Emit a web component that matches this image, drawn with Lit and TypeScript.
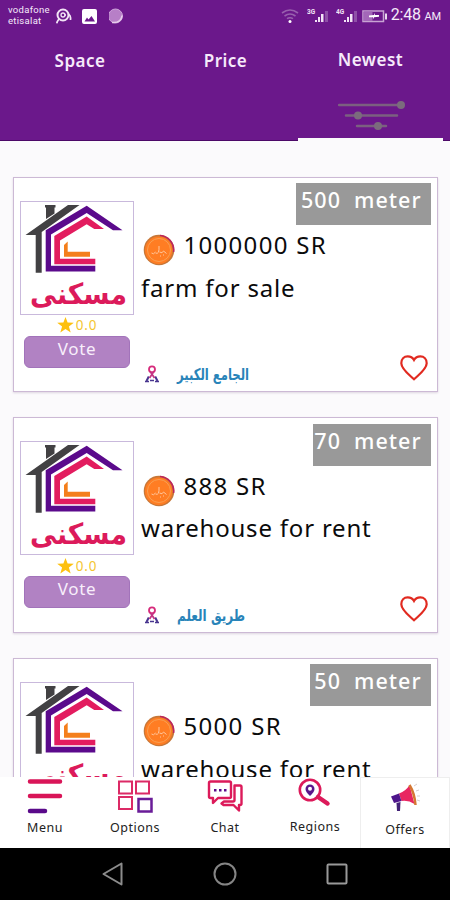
import { LitElement, html, css, svg } from "lit";
import { customElement, property } from "lit/decorators.js";

interface Listing {
  area: string;
  areaWidth: number;
  price: string;
  title: string;
  place: string;
  placeWidth: number;
}

const listings: Listing[] = [
  { area: "500", areaWidth: 135, price: "1000000 SR", title: "farm for sale", place: "الجامع الكبير", placeWidth: 72 },
  { area: "70", areaWidth: 118, price: "888 SR", title: "warehouse for rent", place: "طريق العلم", placeWidth: 68 },
  { area: "50", areaWidth: 121, price: "5000 SR", title: "warehouse for rent", place: "طريق العلم", placeWidth: 68 },
];

const logo = html`<svg width="112" height="112" viewBox="0 0 112 112">
  <g fill="#424143">
    <path d="M24 3h10.500v2.500h-1v6L25 17V5.500h-1z" />
    <path d="M47 3h11.500L20.700 30v40.700h-6V33H4.500z" />
  </g>
  <path d="M24.700 28.300L65.700 3.700 101.500 28.300H92L65.700 11 30 32.500v31.200h44.300v5.800H24.700z" fill="#5b0a8c" />
  <path d="M33.300 34L65.700 14.500 83 27h-9.700l-7.600-4.700L39 38.500v18.200h35.300v5.600h-41z" fill="#e31c5f" />
  <path d="M43 43l3.700-3.500v10.200H69v5H43z" fill="#f47f1c" />
  <text class="brand" x="9" y="102" textLength="97" lengthAdjust="spacingAndGlyphs">مسكنى</text>
</svg>`;

const star = html`<svg width="17" height="16" viewBox="0 0 17 16"><path fill="#fdc00f" d="M8.500 0l2.100 5.500 6.200.200-4.900 3.700 1.800 6-5.200-3.500-5.200 3.500 1.800-6L.200 5.700l6.200-.200z"/></svg>`;

const coin = html`<svg width="32" height="32" viewBox="0 0 32 32">
  <circle cx="16" cy="16" r="15.300" fill="#c77738" />
  <path d="M17 1.400A14.700 14.700 0 0 1 30.600 18" fill="none" stroke="#bd245e" stroke-width="1.500" />
  <circle cx="15.700" cy="16.200" r="13.700" fill="#ff7d23" />
  <circle cx="16" cy="16" r="11.500" fill="none" stroke="#f8a153" stroke-width="1" />
  <path d="M8.500 19q2 2 4-1m0 1q4 2 3.500-7m.500 6q3 2 4-1l3 2.500M17 22h1M20 21h1" fill="none" stroke="#ffc69c" stroke-width="1" />
</svg>`;

const person = html`<svg width="14" height="18" viewBox="0 0 14 18" fill="none">
  <path d="M3.800 11.500L1.500 16M10.200 11.500l2.300 4.500" stroke="#48358f" stroke-width="2" />
  <path d="M0 16.500h4M10 16.500h4M5 15.500h4" stroke="#48358f" stroke-width="1.500" />
  <circle cx="7" cy="4.300" r="3" stroke="#d62b7b" stroke-width="1.800" />
  <path d="M5.500 7L9.500 13M8.500 7l-4 6" stroke="#c43584" stroke-width="1.800" />
</svg>`;

const heart = html`<svg width="28" height="26" viewBox="0 0 28 26"><path d="M14 24.300C9 19.600 1.300 14 1.300 8.200 1.300 4.200 4 1.400 7.700 1.400c2.500 0 5 1.300 6.300 3.600 1.300-2.300 3.800-3.600 6.300-3.600 3.700 0 6.400 2.800 6.400 6.800C26.700 14 19 19.600 14 24.300z" fill="none" stroke="#e12a20" stroke-width="2.200"/></svg>`;

@customElement("listing-card")
class ListingCard extends LitElement {
  @property({ attribute: false }) item!: Listing;

  static styles = css`
    :host { display: flex; box-sizing: border-box; width: 425px; height: 215.5px; border: 1.3px solid #ccb9d5; background: #fff; box-shadow: 0 1px 2px #ddd5e1; flex: none; padding-left: 6px; }
    .left { width: 114px; padding-top: 23px; display: flex; flex-direction: column; align-items: center; flex: none; }
    .frame { width: 112px; height: 112px; border: 1px solid #c9b9dc; flex: none; }
    .frame svg { display: block; }
    .brand { font: 700 29px "DejaVu Sans", sans-serif; fill: #dc1a5b; direction: ltr; }
    .rating { height: 21px; display: flex; align-items: center; gap: 2px; color: #f4c62f; font-size: 13.500px; letter-spacing: .8px; }
    .vote { width: 106px; height: 32px; box-sizing: border-box; border: 1px solid #a273ba; border-radius: 6px; background: #b182c3; color: #f8eefb; text-align: center; font-size: 17px; line-height: 24px; letter-spacing: .6px; }
    .right { flex: 1; padding: 5.500px 6.500px 0 7px; display: flex; flex-direction: column; min-width: 0; }
    .area { align-self: flex-end; height: 42px; box-sizing: border-box; padding: 0 9px 0 0; text-align: right; background: #999; color: #fff; font-size: 21.500px; font-weight: 500; line-height: 33px; letter-spacing: 1px; white-space: pre; flex: none; }
    .price { display: flex; height: 38px; margin-top: 5px; gap: 8.500px; align-items: center; padding-left: 2px; }
    .price span { margin-top: -8px; }
    .price svg { margin-top: 2px; }
    .price span, .title { font-size: 24px; line-height: 34px; color: #0b0b0b; letter-spacing: 1.300px; white-space: nowrap; }
    .title { margin-top: 2.500px; letter-spacing: .8px; }
    .foot { margin-top: auto; height: 44px; display: flex; align-items: flex-start; padding-left: 4px; }
    .foot .who { margin: 18px 17px 0 0; }
    .place { margin: 17px 0 0 1px; overflow: visible; }
    .place text { font: 700 16px "DejaVu Sans", sans-serif; fill: #2984b9; }
    .heart { margin: 8px 3px 0 auto; }
  `;

  render() {
    const { area, areaWidth, price, title, place, placeWidth } = this.item;
    return html`
      <div class="left">
        <div class="frame">${logo}</div>
        <div class="rating">${star}<span>0.0</span></div>
        <div class="vote">Vote</div>
      </div>
      <div class="right">
        <div class="area" style="width:${areaWidth}px">${area}  meter</div>
        <div class="price">${coin}<span>${price}</span></div>
        <div class="title">${title}</div>
        <div class="foot">
          <div class="who">${person}</div>
          <svg class="place" width=${placeWidth} height="24">
            <text x="0" y="16" textLength=${placeWidth} lengthAdjust="spacingAndGlyphs">${place}</text>
          </svg>
          <div class="heart">${heart}</div>
        </div>
      </div>`;
  }
}

const signal = (label: string) => html`<svg class="signal" width="24" height="18" viewBox="0 0 24 18">
  <text x="0" y="6.500" class="net">${label}</text>
  <path d="M8 15v-2h2v2zM11 15v-5h2v5zM14 15V7h2.500v8z" fill="#f2e4f6" />
  <path d="M18 15V4h3v11z" fill="#8e50a7" />
</svg>`;

const navIcons = {
  menu: svg`<path d="M3 4.500h30M3 19h30" stroke="#d91558" stroke-width="4.500" stroke-linecap="round"/><path d="M3 34h15" stroke="#5a0a8a" stroke-width="4.500" stroke-linecap="round"/>`,
  options: svg`<g fill="none" stroke-width="2"><path stroke="#dc2a66" d="M2 4.500h13v12H2zM19 4.500h13v12H19zM2 20h13v12H2z"/><path stroke="#6a1c98" stroke-width="2.500" d="M21.500 22h13v12.500h-13z"/></g>`,
  chat: svg`<g fill="none" stroke="#dc1a5a" stroke-width="2.400" stroke-linejoin="round"><path d="M3.500 4.500h19q1.500 0 1.500 1.500v13.500q0 1.500-1.500 1.500H11l-5 5v-5H3.500Q2 21 2 19.500V6q0-1.500 1.500-1.500z"/><path d="M27.500 8.500H33q1.500 0 1.500 1.500v16.500Q34.500 28 33 28h-1v5.500L26.500 28h-10l-2-1.500 2.500-2h9q1.500 0 1.500-1.500z"/></g><path d="M7 12h2.500v2.500H7zM12 12h2.500v2.500H12zM17 12h2.500v2.500H17z" fill="#5a0a8a"/>`,
  regions: svg`<circle cx="13" cy="13" r="10.200" fill="none" stroke="#dc1a5a" stroke-width="2.600"/><path d="M21 20l9.500 6.500" stroke="#dc1a5a" stroke-width="4.500" stroke-linecap="round"/><path d="M13 19q-4.500-4-4.500-7a4.500 4.500 0 0 1 9 0q0 3-4.500 7z" fill="#5a168c"/><circle cx="13" cy="11.700" r="2" fill="#fff"/>`,
  offers: svg`<path d="M12 15.500Q19 13 22.500 7l5 19q-6-4-13-3z" fill="#e82661"/><path d="M22.500 7q5 8 6 20" fill="none" stroke="#d57733" stroke-width="2.500"/><path d="M4 18.500l8-3 2.500 7.500-7.500 2z" fill="#4e168b"/><path d="M9.500 25l4-1-.500 9h-3z" fill="#422176"/><path d="M27 8l3-2m-1 7 3-1m-2 6h3m-3 4 3 1" stroke="#d8cdd0"/>`,
};

const nav: { icon: keyof typeof navIcons; label: string; active?: boolean }[] = [
  { icon: "menu", label: "Menu" },
  { icon: "options", label: "Options" },
  { icon: "chat", label: "Chat" },
  { icon: "regions", label: "Regions" },
  { icon: "offers", label: "Offers", active: true },
];

@customElement("app-root")
class AppRoot extends LitElement {
  static styles = css`
    :host { display: flex; flex-direction: column; width: 450px; height: 900px; overflow: hidden; background: #fbfafc; font-family: "Noto Sans", sans-serif; }
    header { height: 141px; background: #6b188b; box-sizing: border-box; border-bottom: 1.500px solid #4c0968; flex: none; color: #f6eafa; }
    .status { height: 32px; display: flex; align-items: center; padding: 0 9px 0 8px; }
    .carrier { font: 400 9.500px/11px Roboto, sans-serif; width: 47px; display: flex; flex-direction: column; letter-spacing: .3px; margin-top: -2px; }
    .status svg { flex: none; }
    .sp { flex: 1; }
    .net { font: 700 6.500px Roboto, sans-serif; fill: #f2e4f6; }
    .signal { margin-left: 5px; }
    .clock { font: 400 16px/20px Roboto, sans-serif; margin-left: 3px; white-space: nowrap; letter-spacing: -.2px; }
    .clock small { font-size: 11px; }
    .tabs { display: grid; grid-template-columns: 146px 145px 145px; padding: 0 7px; height: 109px; }
    .tab { display: flex; flex-direction: column; align-items: center; font-weight: 600; font-size: 17px; line-height: 24px; letter-spacing: .5px; padding-top: 17px; box-sizing: border-box; }
    .tab.on { padding-top: 16px; border-bottom: 3.500px solid #fbfafc; }
    .tab svg { margin: 28px 0 0 2px; }
    .list { flex: 1; min-height: 0; overflow: hidden; display: flex; flex-direction: column; gap: 25px; padding: 35.500px 0 0 13px; }
    nav { height: 71px; background: #fff; display: grid; grid-template-columns: repeat(5, 90px); flex: none; }
    .item { display: flex; flex-direction: column; align-items: center; font-size: 12.500px; line-height: 18px; color: #222; letter-spacing: .5px; box-sizing: border-box; }
    .item span { margin-top: 4px; }
    .item.raised span { margin-top: 3px; }
    .item.on { border-left: 1px solid #eee; border-right: 1px solid #eee; border-top: 1px solid #eee; }
    .item.on span { margin-top: 5px; }
    footer { height: 52px; background: #000; flex: none; display: grid; grid-template-columns: repeat(3, 112px); padding: 0 57px; box-sizing: border-box; }
    footer svg { justify-self: center; margin-top: 14px; }
  `;

  render() {
    return html`
      <header>
        <div class="status">
          <div class="carrier"><span>vodafone</span><span>etisalat</span></div>
          <svg width="17" height="17" viewBox="0 0 17 17" fill="none" stroke="#f2e4f6">
            <circle cx="8" cy="7" r="5.500" stroke-width="2" /><circle cx="8" cy="7" r="2" stroke-width="1.300" />
            <path d="M9 7h2M4 11l-2 3M13 6q3 1 2.500 6" stroke-width="1.700" />
            <circle cx="2" cy="14.500" r="1" fill="#f2e4f6" stroke="none" />
          </svg>
          <svg width="37" height="17" viewBox="0 0 37 17">
            <path fill-rule="evenodd" fill="#fff" d="M12 1h11q2 0 2 2v11q0 2-2 2H12q-2 0-2-2V3q0-2 2-2zM12.500 13.500h10.500L19.500 8l-3 3.500-1.500-2z" />
          </svg>
          <svg width="16" height="17" viewBox="0 0 16 17"><circle cx="6.500" cy="8" r="7" fill="#b77fc7" stroke="#cda3da" /><path d="M3 14.500q9 1 10-7" fill="none" stroke="#e7cdec" stroke-width="1.500" /></svg>
          <div class="sp"></div>
          <svg width="18" height="16" viewBox="0 0 18 16" fill="none" stroke="#9860ae" stroke-width="1.600">
            <path d="M1 5q8-6 16 0M3.500 8q5.500-4 11 0M6 10.700q3-2 6 0" /><circle cx="9" cy="13.500" r="1.500" fill="#fff" stroke="none" />
          </svg>
          <svg width="3" height="1"></svg>
          ${signal("3G")}${signal("4G")}
          <svg width="28" height="16" viewBox="0 0 28 16">
            <path d="M3 3h20.500v10.500H3z" fill="none" stroke="#c8a3d3" stroke-width="1.500" />
            <path d="M3.500 3.500h9v9.500h-9z" fill="#a367b8" /><path d="M25 5.500h2v6h-2z" fill="#e8d8ee" />
            <path d="M9 7.500l5-.500V5l1 2h4v1.700l-5 .500v2l-1-2H9z" fill="#fff" />
          </svg>
          <div class="clock">2:48 <small>AM</small></div>
        </div>
        <div class="tabs">
          <div class="tab">Space</div>
          <div class="tab">Price</div>
          <div class="tab on">
            Newest
            <svg width="68" height="30" viewBox="0 0 68 30">
              <path d="M1 5h60M8 15.500h51M19 26h29" stroke="#7b6080" stroke-width="2.500" stroke-linecap="round" />
              <g fill="#7b6b7d"><circle cx="63" cy="5" r="4" /><circle cx="20" cy="15.500" r="4" /><circle cx="40" cy="26" r="4" /></g>
            </svg>
          </div>
        </div>
      </header>
      <div class="list">${listings.map((l) => html`<listing-card .item=${l}></listing-card>`)}</div>
      <nav>
        ${nav.map((n) => html`<div class="item ${n.active ? "on" : n.icon === "regions" ? "raised" : ""}">
          <svg width="36" height="38" viewBox="0 0 36 38">${navIcons[n.icon]}</svg>
          <span>${n.label}</span>
        </div>`)}
      </nav>
      <footer>
        <svg width="24" height="24" viewBox="0 0 24 24"><path d="M20.500 1.500v21L2.500 12z" fill="none" stroke="#8c8c8c" stroke-width="2" stroke-linejoin="round" /></svg>
        <svg width="24" height="24" viewBox="0 0 24 24"><circle cx="12" cy="12" r="10.500" fill="none" stroke="#858585" stroke-width="2" /></svg>
        <svg width="24" height="24" viewBox="0 0 24 24"><rect x="2.500" y="2.500" width="19" height="19" rx="1" fill="none" stroke="#999" stroke-width="2" /></svg>
      </footer>`;
  }
}
